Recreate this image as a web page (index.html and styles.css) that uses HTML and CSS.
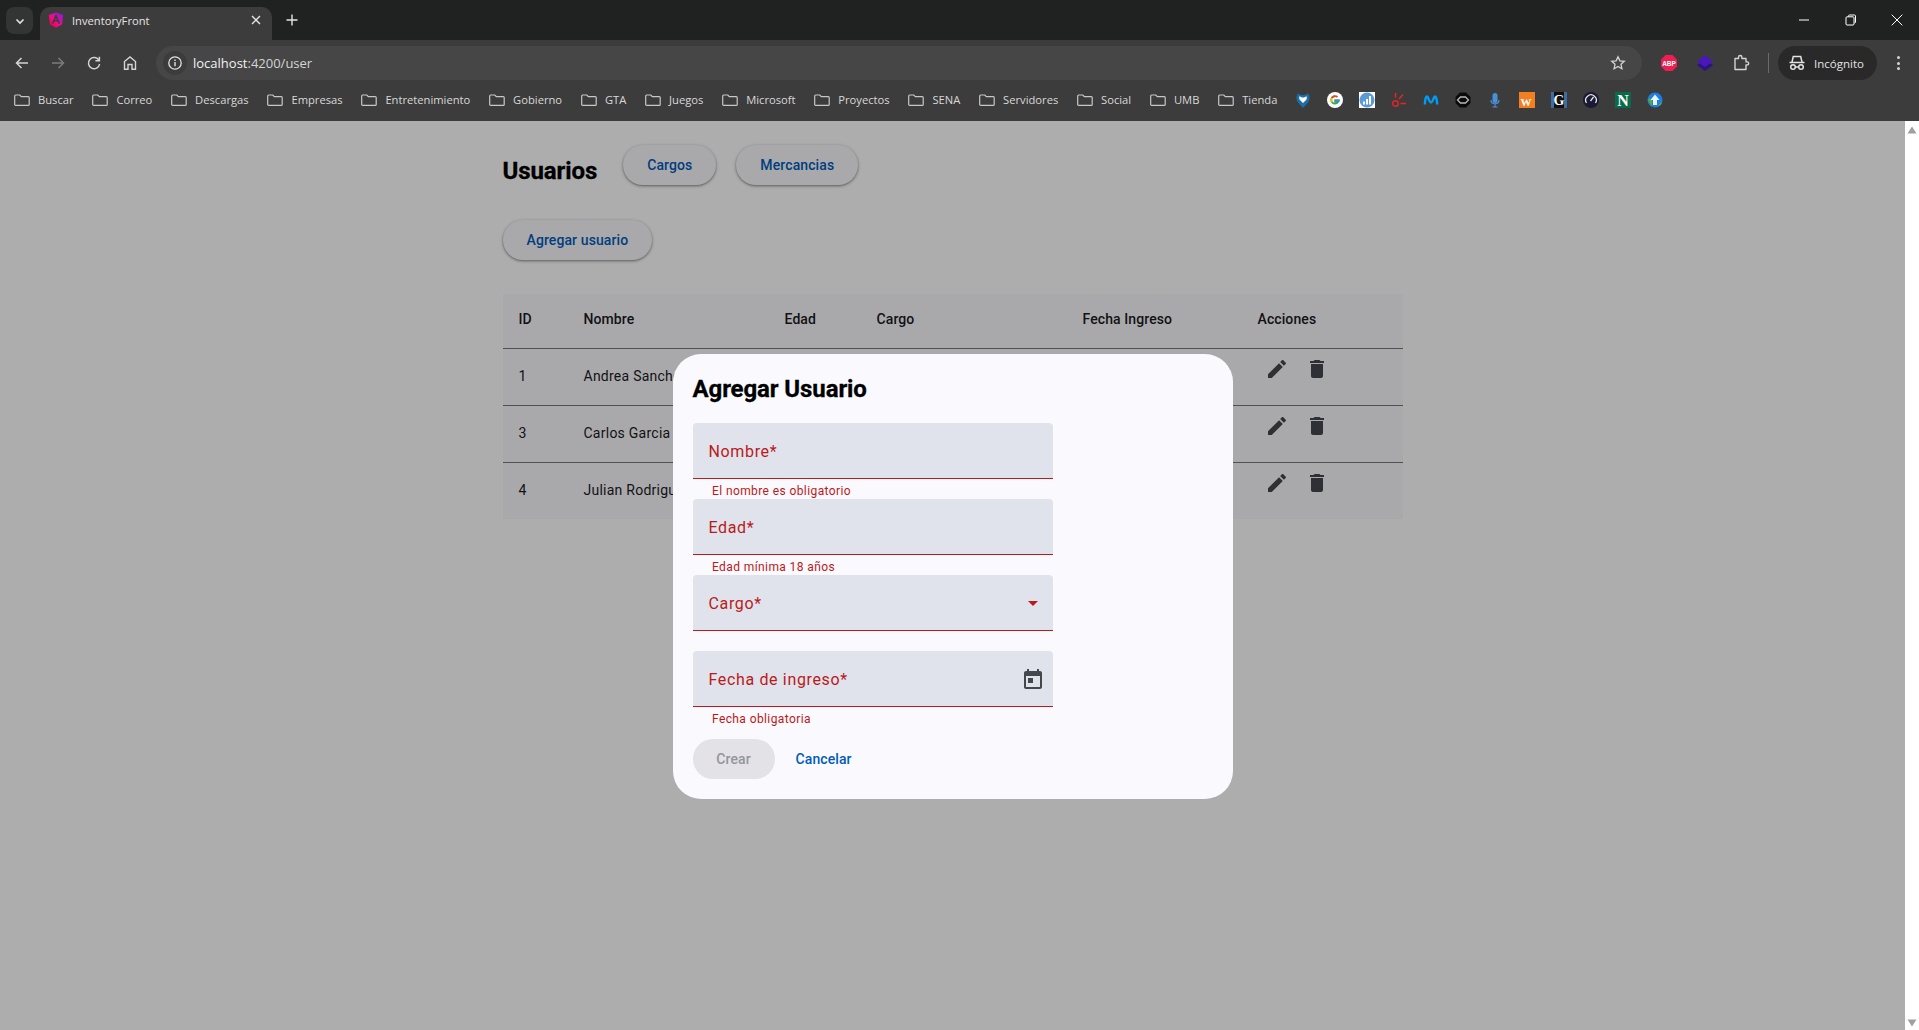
FILE: index.html
```html
<!DOCTYPE html>
<html lang="es">
<head>
<meta charset="UTF-8">
<meta name="viewport" content="width=device-width, initial-scale=1.0">
<title>InventoryFront</title>
<link rel="stylesheet" href="styles.css">
</head>
<body>

<svg class="defs" width="0" height="0" aria-hidden="true">
  <symbol id="folder" viewBox="0 0 16 16">
    <path d="M1.6 3h4.2l1.5 1.6h7c.5 0 .9.4.9.9v7c0 .5-.4.9-.9.9H1.6c-.5 0-.9-.4-.9-.9V3.900c0-.5.4-.9.9-.9z" fill="none" stroke="#c7c7c7" stroke-width="1.2"/>
  </symbol>
  <symbol id="edit" viewBox="0 0 24 24">
    <path d="M3 17.250V21h3.750L17.810 9.940l-3.750-3.750L3 17.250zM20.710 7.040c.39-.39.39-1.020 0-1.410l-2.340-2.340c-.39-.39-1.020-.39-1.410 0l-1.830 1.830 3.750 3.750 1.830-1.830z"/>
  </symbol>
  <symbol id="trash" viewBox="0 0 24 24">
    <path d="M6 19c0 1.100.9 2 2 2h8c1.100 0 2-.9 2-2V7H6v12zM19 4h-3.500l-1-1h-5l-1 1H5v2h14V4z"/>
  </symbol>
</svg>

<!-- navegador -->
<div class="browser">
  <div class="tabstrip">
    <div class="tab-search">
      <svg width="12" height="12" viewBox="0 0 12 12"><path d="M2.500 4.500 6 8l3.500-3.500" fill="none" stroke="#e3e3e3" stroke-width="1.600"/></svg>
    </div>
    <div class="tab">
      <svg class="favicon" width="16" height="16" viewBox="0 0 16 16">
        <defs>
          <linearGradient id="ng" x1="0" y1="1" x2="1" y2="0">
            <stop offset="0" stop-color="#e40035"/>
            <stop offset=".45" stop-color="#f60a8a"/>
            <stop offset="1" stop-color="#7a1ee0"/>
          </linearGradient>
        </defs>
        <path d="M1.900 12.300.8 3 8 .5 15.200 3l-1.100 9.300L8 15.700z" fill="url(#ng)"/>
        <path d="M8 1.800 3.800 11.500h1.900l.8-2h3l.8 2h1.900zM7.200 7.900 8 5.700l.8 2.200z" fill="#3c3c3c"/>
      </svg>
      <span class="tab-title">InventoryFront</span>
      <svg class="tab-close" width="10" height="10" viewBox="0 0 10 10"><path d="M1 1l8 8M9 1 1 9" stroke="#e3e3e3" stroke-width="1.400"/></svg>
    </div>
    <svg class="new-tab" width="12" height="12" viewBox="0 0 12 12"><path d="M6 .5v11M.5 6h11" stroke="#e3e3e3" stroke-width="1.400"/></svg>
    <div class="window-controls">
      <svg width="12" height="12" viewBox="0 0 12 12"><path d="M1 6h10" stroke="#fff"/></svg>
      <svg width="12" height="12" viewBox="0 0 12 12"><path d="M3.500 2.500V2c0-.6.4-1 1-1h5c.6 0 1 .4 1 1v6c0 .6-.4 1-1 1M2 2.800h6c.6 0 1 .4 1 1v6.200c0 .6-.4 1-1 1H2c-.6 0-1-.4-1-1V3.800c0-.6.4-1 1-1z" fill="none" stroke="#fff"/></svg>
      <svg width="12" height="12" viewBox="0 0 12 12"><path d="M.7.700l10.600 10.600M11.300.700.7 11.300" stroke="#fff"/></svg>
    </div>
  </div>

  <div class="toolbar">
    <div class="nav-icons">
      <svg width="16" height="16" viewBox="0 0 16 16"><path d="M14 8H2.500M7.500 3 2.500 8l5 5" fill="none" stroke="#d4d4d4" stroke-width="1.500"/></svg>
      <svg width="16" height="16" viewBox="0 0 16 16"><path d="M2 8h11.500M8.500 3l5 5-5 5" fill="none" stroke="#7c7c7c" stroke-width="1.500"/></svg>
      <svg width="16" height="16" viewBox="0 0 16 16"><path d="M13 5.500A5.600 5.600 0 1 0 13.600 9M13.400 1.800v4h-4" fill="none" stroke="#d4d4d4" stroke-width="1.500"/></svg>
      <svg width="16" height="16" viewBox="0 0 16 16"><path d="M2.500 14.200V6.500L8 2l5.500 4.500v7.700H10V9.500H6v4.700z" fill="none" stroke="#d4d4d4" stroke-width="1.400"/></svg>
    </div>
    <div class="omnibox">
      <div class="site-chip">
        <svg width="16" height="16" viewBox="0 0 16 16"><circle cx="8" cy="8" r="6.200" fill="none" stroke="#e3e3e3" stroke-width="1.300"/><path d="M8 7v4.300M8 4.500v1.400" stroke="#e3e3e3" stroke-width="1.400"/></svg>
      </div>
      <span class="url"><b>localhost</b>:4200/user</span>
      <svg class="star" width="16" height="16" viewBox="0 0 16 16"><path d="M8 1.800l1.900 4 4.400.5-3.300 3 .9 4.400L8 11.500l-3.900 2.200.9-4.400-3.300-3 4.400-.5z" fill="none" stroke="#d4d4d4" stroke-width="1.300"/></svg>
    </div>
    <div class="extensions">
      <svg width="18" height="18" viewBox="0 0 18 18"><path d="M5.500 1h7L17 5.500v7L12.500 17h-7L1 12.500v-7z" fill="#ee1d52"/><text x="9" y="11.500" class="abp-text">ABP</text></svg>
      <svg width="18" height="18" viewBox="0 0 18 18"><path d="M9 5.500l8 5.500-8 6-8-6z" fill="#2b1380"/><path d="M9 1l8 6.500L9 13 1 7.500z" fill="#4a18b8"/></svg>
      <svg width="18" height="18" viewBox="0 0 18 18"><path d="M3 4.500h3.500V3.200a1.700 1.700 0 0 1 3.400 0v1.300H14v3.400h1.200a1.500 1.500 0 0 1 0 3H14V15.500H3z" fill="none" stroke="#d4d4d4" stroke-width="1.400" stroke-linejoin="round"/></svg>
    </div>
    <div class="separator"></div>
    <div class="incognito">
      <svg width="18" height="18" viewBox="0 0 18 18"><path d="M1.500 8.500h15M4 8l1.300-5.500h7.400L14 8" fill="none" stroke="#e3e3e3" stroke-width="1.500"/><circle cx="5" cy="13" r="2.300" fill="none" stroke="#e3e3e3" stroke-width="1.500"/><circle cx="13" cy="13" r="2.300" fill="none" stroke="#e3e3e3" stroke-width="1.500"/><path d="M7.300 13h3.400" stroke="#e3e3e3" stroke-width="1.500"/></svg>
      <span>Incógnito</span>
    </div>
    <div class="kebab"><i></i><i></i><i></i></div>
  </div>

  <div class="bookmarks">
    <div class="bookmark"><svg width="16" height="16"><use href="#folder"/></svg>Buscar</div>
    <div class="bookmark"><svg width="16" height="16"><use href="#folder"/></svg>Correo</div>
    <div class="bookmark"><svg width="16" height="16"><use href="#folder"/></svg>Descargas</div>
    <div class="bookmark"><svg width="16" height="16"><use href="#folder"/></svg>Empresas</div>
    <div class="bookmark"><svg width="16" height="16"><use href="#folder"/></svg>Entretenimiento</div>
    <div class="bookmark"><svg width="16" height="16"><use href="#folder"/></svg>Gobierno</div>
    <div class="bookmark"><svg width="16" height="16"><use href="#folder"/></svg>GTA</div>
    <div class="bookmark"><svg width="16" height="16"><use href="#folder"/></svg>Juegos</div>
    <div class="bookmark"><svg width="16" height="16"><use href="#folder"/></svg>Microsoft</div>
    <div class="bookmark"><svg width="16" height="16"><use href="#folder"/></svg>Proyectos</div>
    <div class="bookmark"><svg width="16" height="16"><use href="#folder"/></svg>SENA</div>
    <div class="bookmark"><svg width="16" height="16"><use href="#folder"/></svg>Servidores</div>
    <div class="bookmark"><svg width="16" height="16"><use href="#folder"/></svg>Social</div>
    <div class="bookmark"><svg width="16" height="16"><use href="#folder"/></svg>UMB</div>
    <div class="bookmark"><svg width="16" height="16"><use href="#folder"/></svg>Tienda</div>
    <div class="bookmark-icons">
      <svg width="16" height="16" viewBox="0 0 16 16"><path d="M8 16 3 10.500C1 8 1 3.500 3 1.500 5 2.500 6.500 3 8 3s3-.5 5-1.500c2 2 2 6.500 0 9z" fill="#1a6fa8"/><path d="M8 11 4.500 7.500C4 6 4.200 5 4.500 4.300 6 5.200 7 5.500 8 5.500s2-.3 3.500-1.200c.3.700.5 1.700 0 3.200z" fill="#fff"/></svg>
      <svg width="16" height="16" viewBox="0 0 16 16"><circle cx="8" cy="8" r="8" fill="#fff"/><path d="M12.700 8.200H8.100v1.500h2.800a3.100 3.100 0 0 1-2.900 2A3.700 3.700 0 0 1 8 4.300" fill="none" stroke="#34a853" stroke-width="1.800"/><path d="M4.700 5.900A3.800 3.800 0 0 1 10.500 5" fill="none" stroke="#ea4335" stroke-width="1.800"/><path d="M4.300 8c0-.8.1-1.400.4-2.100M4.300 8c0 .7.2 1.400.5 2" fill="none" stroke="#fbbc05" stroke-width="1.800"/><path d="M8.100 8.300h4.700c0 .8-.3 1.800-.8 2.500L10.500 9.700H8.100z" fill="#4285f4"/></svg>
      <svg width="16" height="16" viewBox="0 0 16 16"><rect width="16" height="16" fill="#fff"/><circle cx="8" cy="8" r="7.500" fill="#5b9bd5"/><path d="M4 9.500h2v3H4zM7 7h2v5.500H7zM10 4h2v8.500h-2z" fill="#fff"/></svg>
      <svg width="16" height="16" viewBox="0 0 16 16"><circle cx="4.500" cy="11.500" r="2.800" fill="none" stroke="#ee2028" stroke-width="1.400"/><path d="M4.500 1v4.500M8 7l4-4.500M9.500 11.500H15" stroke="#ee2028" stroke-width="1.500"/></svg>
      <svg width="16" height="16" viewBox="0 0 16 16"><path d="M1.800 12.500C2 8 2.800 4.500 4 4.500c1.500 0 2 6 4 6s2.500-6 4-6c1.200 0 2 3.500 2.200 8" fill="none" stroke="#019df4" stroke-width="2.400"/></svg>
      <svg width="16" height="16" viewBox="0 0 16 16"><path d="M5 .5h6L15.500 5v6L11 15.500H5L.5 11V5z" fill="#0a0a0a"/><path d="M2.500 8 5.500 5h5l3 3-3 3h-5z" fill="none" stroke="#b8b8b8" stroke-width="1.300"/></svg>
      <svg width="16" height="16" viewBox="0 0 16 16"><rect x="5.500" y="1" width="5" height="10" rx="2.500" fill="#4a90d9"/><path d="M4 8c0 5 8 5 8 0M8 11.500V15M5.500 15h5" fill="none" stroke="#4a90d9" stroke-width="1.200"/></svg>
      <svg width="16" height="16" viewBox="0 0 16 16"><rect width="16" height="16" fill="#f47f20"/><text x="7" y="14" class="icon-letter icon-w">W</text></svg>
      <svg width="16" height="16" viewBox="0 0 16 16"><rect width="16" height="16" fill="#3c6ea5"/><rect x="3" width="10" height="16" fill="#111"/><text x="8" y="13" class="icon-letter icon-g">G</text></svg>
      <svg width="16" height="16" viewBox="0 0 16 16"><circle cx="8" cy="8" r="8" fill="#1a1a35"/><path d="M3.500 11a5.300 5.300 0 1 1 9 0" fill="none" stroke="#e8e8e8" stroke-width="1.300"/><path d="M7.500 9l3-4" stroke="#e8e8e8" stroke-width="1.300"/></svg>
      <svg width="16" height="16" viewBox="0 0 16 16"><rect width="16" height="16" fill="#0a6b4a"/><text x="8" y="13.500" class="icon-letter icon-n">N</text></svg>
      <svg width="16" height="16" viewBox="0 0 16 16"><circle cx="8" cy="8" r="7.500" fill="#1a7fe8"/><path d="M1 8c1-2 3-2 4 0s-1 4 1 6l-2-1zM11 14c1-2 2-3 4-4l-1 3z" fill="#5ea83a"/><path d="M8 2.500 12.500 8H10v5H6V8H3.500z" fill="#eaf4ff"/></svg>
    </div>
  </div>
</div>

<div class="viewport">
  <div class="page">
    <div class="content">
      <div class="top-row">
        <h2>Usuarios</h2>
        <button class="elevated-btn">Cargos</button>
        <button class="elevated-btn">Mercancias</button>
      </div>
      <button class="elevated-btn add-btn">Agregar usuario</button>

      <table class="users-table">
        <colgroup>
          <col class="col-id"><col class="col-name"><col class="col-age">
          <col class="col-role"><col class="col-date"><col class="col-actions">
        </colgroup>
        <thead>
          <tr><th>ID</th><th>Nombre</th><th>Edad</th><th>Cargo</th><th>Fecha Ingreso</th><th>Acciones</th></tr>
        </thead>
        <tbody>
          <tr>
            <td>1</td><td>Andrea Sanchez</td><td></td><td></td><td></td>
            <td class="actions">
              <span class="icon-btn"><svg width="24" height="24"><use href="#edit"/></svg></span>
              <span class="icon-btn"><svg width="24" height="24"><use href="#trash"/></svg></span>
            </td>
          </tr>
          <tr>
            <td>3</td><td>Carlos Garcia</td><td></td><td></td><td></td>
            <td class="actions">
              <span class="icon-btn"><svg width="24" height="24"><use href="#edit"/></svg></span>
              <span class="icon-btn"><svg width="24" height="24"><use href="#trash"/></svg></span>
            </td>
          </tr>
          <tr>
            <td>4</td><td>Julian Rodriguez</td><td></td><td></td><td></td>
            <td class="actions">
              <span class="icon-btn"><svg width="24" height="24"><use href="#edit"/></svg></span>
              <span class="icon-btn"><svg width="24" height="24"><use href="#trash"/></svg></span>
            </td>
          </tr>
        </tbody>
      </table>
    </div>

    <!-- dialogo -->
    <div class="overlay">
      <div class="dialog">
        <h2 class="dialog-title">Agregar Usuario</h2>
        <div class="form-field">
          <div class="field-box"><span>Nombre*</span></div>
          <div class="field-error">El nombre es obligatorio</div>
        </div>
        <div class="form-field">
          <div class="field-box"><span>Edad*</span></div>
          <div class="field-error">Edad mínima 18 años</div>
        </div>
        <div class="form-field">
          <div class="field-box"><span>Cargo*</span><i class="select-arrow"></i></div>
          <div class="field-error"></div>
        </div>
        <div class="form-field">
          <div class="field-box">
            <span>Fecha de ingreso*</span>
            <svg class="calendar" width="24" height="24" viewBox="0 0 24 24"><path d="M19 3h-1V1h-2v2H8V1H6v2H5c-1.110 0-1.990.9-1.990 2L3 19c0 1.100.89 2 2 2h14c1.100 0 2-.9 2-2V5c0-1.100-.9-2-2-2zm0 16H5V8h14v11zM7 10h5v5H7z"/></svg>
          </div>
          <div class="field-error">Fecha obligatoria</div>
        </div>
        <div class="dialog-actions">
          <button class="btn-create" disabled>Crear</button>
          <button class="btn-cancel">Cancelar</button>
        </div>
      </div>
    </div>
  </div>

  <div class="scrollbar">
    <svg width="10" height="8" viewBox="0 0 10 8"><path d="M5 .5 9.500 7.500H.5z"/></svg>
    <svg width="10" height="8" viewBox="0 0 10 8"><path d="M5 7.500 9.500.5H.5z"/></svg>
  </div>
</div>

</body>
</html>
```

FILE: styles.css
```css
* {
  box-sizing: border-box;
}
html, body {
  height: 100%;
}
body {
  margin: 0;
  display: flex;
  flex-direction: column;
  overflow: hidden;
  font-family: Roboto, Arial, sans-serif;
  background: #fff;
}
.defs {
  position: absolute;
}

/* navegador */
.browser {
  height: 121px;
  flex: none;
  font-family: "Open Sans", "Noto Sans", Arial, sans-serif;
  color: #e3e3e3;
  background: #3c3c3c;
}
.tabstrip {
  height: 40px;
  display: flex;
  align-items: flex-end;
  background: #202221;
}
.tab-search {
  width: 27px;
  height: 27px;
  margin: 0 7px 6px 6px;
  border-radius: 8px;
  background: #333535;
  display: flex;
  align-items: center;
  justify-content: center;
}
.tab {
  width: 232px;
  height: 33px;
  padding: 0 10px 7px 8px;
  display: flex;
  align-items: center;
  border-radius: 10px 10px 0 0;
  background: #3c3c3c;
}
.tab-title {
  margin-left: 8px;
  font-size: 11.2px;
  flex: 1;
}
.tab-close {
  margin-right: 1px;
}
.new-tab {
  margin: 0 0 14px 14px;
}
.window-controls {
  margin-left: auto;
  height: 40px;
  display: flex;
  align-items: center;
  gap: 34.5px;
  padding-right: 16px;
}
.toolbar {
  height: 40px;
  display: flex;
  align-items: center;
  padding-top: 6px;
}
.nav-icons {
  display: flex;
  gap: 20px;
  margin-left: 14px;
}
.omnibox {
  margin-left: 18px;
  width: 1486px;
  height: 34px;
  border-radius: 17px;
  background: #464646;
  display: flex;
  align-items: center;
  padding: 0 16px 0 7px;
}
.site-chip {
  width: 24px;
  height: 24px;
  border-radius: 50%;
  background: #3c3c3c;
  display: flex;
  align-items: center;
  justify-content: center;
}
.url {
  margin-left: 6px;
  font-size: 13px;
  color: #d4d4d4;
}
.url b {
  font-weight: 400;
  color: #f2f2f2;
}
.star {
  margin-left: auto;
}
.extensions {
  display: flex;
  gap: 18px;
  margin-left: 18px;
}
.abp-text {
  font: 700 6.500px "Liberation Sans", Arial, sans-serif;
  text-anchor: middle;
  fill: #fff;
}
.separator {
  width: 1px;
  height: 20px;
  margin-left: 18px;
  background: #6a6a6a;
}
.incognito {
  width: 99px;
  height: 34px;
  margin-left: 9px;
  border-radius: 17px;
  background: #292929;
  display: flex;
  align-items: center;
  padding-left: 10px;
  gap: 8px;
  font-size: 11.5px;
}
.kebab {
  margin-left: 20px;
  display: flex;
  flex-direction: column;
  gap: 2.500px;
}
.kebab i {
  width: 3px;
  height: 3px;
  border-radius: 50%;
  background: #d4d4d4;
}
.bookmarks {
  height: 39px;
  display: flex;
  align-items: center;
  padding-left: 14px;
  font-size: 11.2px;
  color: #d8d8d8;
}
.bookmark {
  display: flex;
  align-items: center;
  gap: 8px;
  margin-right: 18.8px;
}
.bookmark-icons {
  display: flex;
  gap: 16px;
  margin-left: -1px;
}
.icon-letter {
  text-anchor: middle;
  font-family: "Liberation Serif", serif;
  font-weight: 700;
}
.icon-w {
  font-size: 11px;
  fill: #fff;
}
.icon-g {
  font-size: 14px;
  fill: #fff;
}
.icon-n {
  font-size: 16px;
  fill: #fff;
}

/* pagina */
.viewport {
  flex: 1;
  display: flex;
  min-height: 0;
}
.page {
  flex: 1;
  position: relative;
  background: #fff;
}
.scrollbar {
  width: 14px;
  flex: none;
  background: #fff;
  display: flex;
  flex-direction: column;
  align-items: center;
  justify-content: space-between;
  padding: 5px 0 3px;
}
.scrollbar path {
  fill: #a0a0a0;
}
.content {
  width: 900px;
  margin: 0 auto;
  padding-top: 24px;
}
.top-row {
  display: flex;
  align-items: flex-start;
  gap: 20px;
  height: 40px;
}
.top-row h2 {
  margin: 10px 6px 0 0;
  font-size: 24px;
  line-height: 32px;
  font-weight: 700;
  letter-spacing: -.1px;
  color: #000;
  -webkit-text-stroke: .3px #000;
}
.elevated-btn {
  height: 40px;
  padding: 0 24px;
  border: none;
  border-radius: 20px;
  background: #faf9fd;
  color: #005cbb;
  font: 500 14px Roboto, Arial, sans-serif;
  letter-spacing: .1px;
  box-shadow: 0 1px 2px rgba(0, 0, 0, .3), 0 1px 3px 1px rgba(0, 0, 0, .15);
}
.add-btn {
  display: block;
  margin: 35px 0 34px;
}
.users-table {
  width: 900px;
  table-layout: fixed;
  border-collapse: collapse;
  background: #faf9fd;
  font-size: 14px;
  color: #1a1b1f;
}
.col-id { width: 65px; }
.col-name { width: 201px; }
.col-age { width: 92px; }
.col-role { width: 206px; }
.col-date { width: 175px; }
.users-table th, .users-table td {
  padding: 0 16px 1px;
  text-align: left;
  white-space: nowrap;
  border-bottom: 1px solid #74777f;
}
.users-table th {
  height: 54px;
  padding-bottom: 3px;
  font-weight: 500;
  letter-spacing: .1px;
}
.users-table td {
  height: 57px;
  letter-spacing: .25px;
}
.users-table tbody tr:last-child td {
  border-bottom: none;
}
.users-table td.actions {
  padding: 0 0 0 15px;
  vertical-align: top;
}
.icon-btn {
  display: inline-flex;
  width: 40px;
  height: 40px;
  align-items: center;
  justify-content: center;
  float: left;
  fill: #44474e;
}

/* dialogo */
.overlay {
  position: absolute;
  inset: 0;
  background: rgba(0, 0, 0, .32);
  display: flex;
  align-items: center;
  justify-content: center;
  padding-top: 2px;
}
.dialog {
  width: 560px;
  height: 445px;
  border-radius: 28px;
  background: #faf9fd;
  padding: 20px;
}
.dialog-title {
  margin: 0 0 17px;
  font-size: 24px;
  line-height: 30px;
  padding-bottom: 2px;
  font-weight: 700;
  letter-spacing: -.1px;
  color: #000;
  -webkit-text-stroke: .3px #000;
}
.form-field {
  width: 360px;
  height: 76px;
}
.field-box {
  position: relative;
  height: 56px;
  padding: 2px 16px 0;
  display: flex;
  align-items: center;
  justify-content: space-between;
  border-radius: 4px 4px 0 0;
  border-bottom: 1px solid #ba1a1a;
  background: #e0e2ec;
  color: #ba1a1a;
  font-size: 16px;
  letter-spacing: .65px;
}
.field-error {
  padding: 4px 16px 0 19.5px;
  font-size: 12px;
  line-height: 16px;
  letter-spacing: .4px;
  color: #ba1a1a;
}
.select-arrow {
  width: 0;
  height: 0;
  margin-right: -1px;
  border-left: 5px solid transparent;
  border-right: 5px solid transparent;
  border-top: 5px solid #ba1a1a;
}
.calendar {
  margin-right: -8px;
  fill: #44474e;
}
.dialog-actions {
  display: flex;
  align-items: center;
  gap: 21px;
  margin-top: 12px;
}
.btn-create {
  width: 82px;
  height: 40px;
  border: none;
  border-radius: 20px;
  background: #e3e2e6;
  color: #94959b;
  font: 500 14px Roboto, Arial, sans-serif;
  letter-spacing: .1px;
}
.btn-cancel {
  padding: 0;
  border: none;
  background: none;
  color: #005cbb;
  font: 500 14px Roboto, Arial, sans-serif;
  letter-spacing: .1px;
}
```
